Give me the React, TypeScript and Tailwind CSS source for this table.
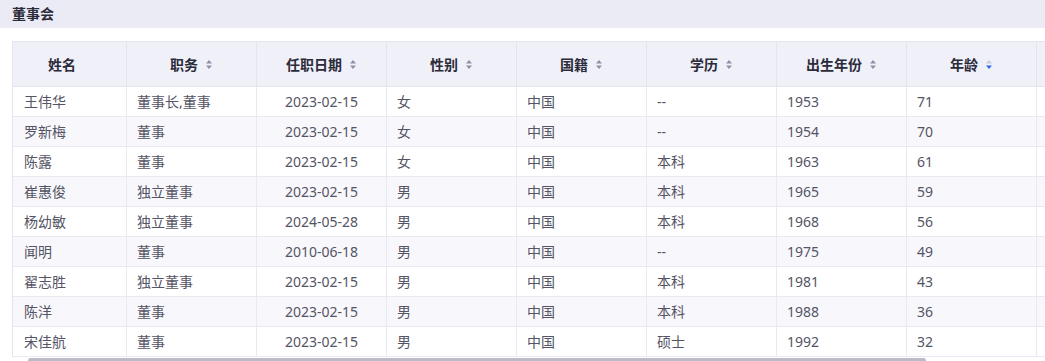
import React from "react";

const rows = [
  ["王伟华", "董事长,董事", "2023-02-15", "女", "中国", "--", "1953", "71"],
  ["罗新梅", "董事", "2023-02-15", "女", "中国", "--", "1954", "70"],
  ["陈露", "董事", "2023-02-15", "女", "中国", "本科", "1963", "61"],
  ["崔惠俊", "独立董事", "2023-02-15", "男", "中国", "本科", "1965", "59"],
  ["杨幼敏", "独立董事", "2024-05-28", "男", "中国", "本科", "1968", "56"],
  ["闻明", "董事", "2010-06-18", "男", "中国", "--", "1975", "49"],
  ["翟志胜", "独立董事", "2023-02-15", "男", "中国", "本科", "1981", "43"],
  ["陈洋", "董事", "2023-02-15", "男", "中国", "本科", "1988", "36"],
  ["宋佳航", "董事", "2023-02-15", "男", "中国", "硕士", "1992", "32"],
];

const headers = ["姓名", "职务", "任职日期", "性别", "国籍", "学历", "出生年份", "年龄"];

function SortIcon({ active, hidden }: { active?: boolean; hidden?: boolean }) {
  return (
    <svg width="8" height="11" viewBox="0 0 8 11" className={`ml-[7px] shrink-0 ${hidden ? "invisible" : ""}`}>
      <path d="M4 1 L7 4.5 L1 4.5 Z" fill={active ? "#c9c9da" : "#8e8ea6"} />
      <path d="M4 10 L7 6.5 L1 6.5 Z" fill={active ? "#2a6ae9" : "#8e8ea6"} />
    </svg>
  );
}

export default function App() {
  const widths = ["w-[114px]", "w-[130px]", "w-[130px]", "w-[130px]", "w-[130px]", "w-[130px]", "w-[130px]", "w-[130px]", "w-[130px]"];
  return (
    <div
      className="w-[1045px] h-[361px] overflow-hidden bg-white"
      style={{ fontFamily: '"Noto Sans", "Noto Sans CJK SC", sans-serif' }}
    >
      <div className="h-[28px] bg-[#ebebf5] flex items-center pl-[12px]">
        <span className="text-[14px] font-bold text-[#2b2b3a] leading-none">董事会</span>
      </div>
      <div className="pl-[12px] pt-[13px]">
        <div className="w-[1300px] border-l border-t border-[#e4e4f1]">
          <div className="flex h-[45px] bg-[#f0f0f9]">
            {widths.map((w, i) => (
              <div
                key={i}
                className={`${w} shrink-0 border-r border-b border-[#e4e4f1] flex items-center justify-center text-[14px] font-bold text-[#2b2b3a]`}
              >
                {headers[i] ?? ""}
                {i === 0 && <SortIcon hidden />}
                {i > 0 && i < 8 && <SortIcon active={i === 7} />}
              </div>
            ))}
          </div>
          {rows.map((r, ri) => (
            <div key={ri} className={`flex h-[30px] ${ri % 2 === 1 ? "bg-[#f8f8fc]" : "bg-white"}`}>
              {widths.map((w, i) => (
                <div
                  key={i}
                  className={`${w} shrink-0 border-r border-b border-[#e9e9f4] flex items-center text-[14px] text-[#545464] ${
                    i === 2 ? "justify-center" : i === 0 ? "pl-[11px]" : "pl-[10px]"
                  }`}
                >
                  {r[i] ?? ""}
                </div>
              ))}
            </div>
          ))}
        </div>
        <div className="mt-[1px] ml-[16px] w-[898px] h-[5px] rounded-[3px] bg-[#bcbcc8]" />
      </div>
    </div>
  );
}
